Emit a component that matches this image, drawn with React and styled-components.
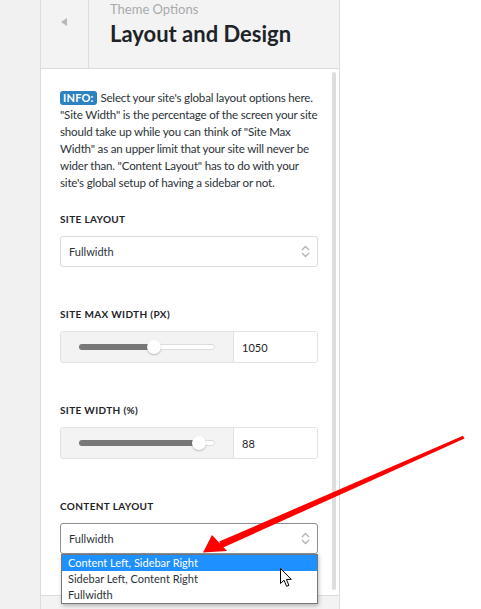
import React from 'react'
import styled, { createGlobalStyle } from 'styled-components'

const GlobalStyle = createGlobalStyle`
  html, body {
    margin: 0;
    padding: 0;
    background: #ffffff;
  }
  body {
    font-family: Lato, 'Noto Sans', Arial, sans-serif;
    color: #3c434a;
  }
`

const sections = [
  { id: 'site-max', label: 'Site Max Width (px)', value: '1050', percent: 55 },
  { id: 'site-width', label: 'Site Width (%)', value: '88', percent: 89 },
]

const layoutOptions = [
  'Content Left, Sidebar Right',
  'Sidebar Left, Content Right',
  'Fullwidth',
]

const Chevrons = () => (
  <svg width="9" height="13" viewBox="0 0 9 13">
    <path d="M1 5 L4.5 1.5 L8 5" fill="none" stroke="#b4b4b4" strokeWidth="1.4" />
    <path d="M1 8 L4.5 11.5 L8 8" fill="none" stroke="#b4b4b4" strokeWidth="1.4" />
  </svg>
)

const Pointer = () => (
  <svg width="13" height="20" viewBox="0 0 13 20">
    <path
      d="M0.5 0.5 L0.5 15.5 L4 12.2 L6.6 18.3 L8.9 17.3 L6.4 11.4 L11.3 11.4 Z"
      fill="#ffffff"
      stroke="#000000"
      strokeWidth="1"
      strokeLinejoin="round"
    />
  </svg>
)

const App = () => {
  return (
    <Page>
      <GlobalStyle />
      <Gutter />
      <Panel>
        <Header>
          <BackButton>
            <BackArrow />
          </BackButton>
          <Titles>
            <Crumb>Theme Options</Crumb>
            <Title>Layout and Design</Title>
          </Titles>
        </Header>

        <Body>
          <Content>
            <Intro>
              <Badge>INFO:</Badge> Select your site's global layout options here.
              "Site Width" is the percentage of the screen your site should take up
              while you can think of "Site Max Width" as an upper limit that your site
              will never be wider than. "Content Layout" has to do with your site's
              global setup of having a sidebar or not.
            </Intro>

            <Control>
              <Label>Site Layout</Label>
              <Select>
                <span>Fullwidth</span>
                <Chevrons />
              </Select>
            </Control>

            {sections.map(item => (
              <Control key={item.id}>
                <Label>{item.label}</Label>
                <RangeGroup>
                  <RangeWell>
                    <Track>
                      <Fill style={{ width: `${item.percent}%` }} />
                      <Thumb style={{ left: `${item.percent}%` }} />
                    </Track>
                  </RangeWell>
                  <NumberBox>{item.value}</NumberBox>
                </RangeGroup>
              </Control>
            ))}

            <Control>
              <Label>Content Layout</Label>
              <SelectWrap>
                <Select focused>
                  <span>Fullwidth</span>
                  <Chevrons />
                </Select>
                <Dropdown>
                  {layoutOptions.map((opt, i) => (
                    <Option key={opt} active={i === 0}>
                      {opt}
                    </Option>
                  ))}
                  <Cursor>
                    <Pointer />
                  </Cursor>
                </Dropdown>
              </SelectWrap>
            </Control>
          </Content>
          <Scrollbar />
        </Body>

        <Footer />
      </Panel>

      <Callout width="481" height="609" viewBox="0 0 481 609">
        <polygon points="463,435.8 464.5,438.6 222,548 219.2,541.6" fill="#ff0000" />
        <polygon points="203,552.5 212,535 227,551" fill="#ff0000" />
      </Callout>
    </Page>
  )
}

const Page = styled.div`
  position: relative;
  display: flex;
  height: 609px;
  overflow: hidden;
  background: #ffffff;
`

const Gutter = styled.div`
  width: 40px;
  flex-shrink: 0;
  background: #f1f1f1;
`

const Panel = styled.div`
  width: 298px;
  flex-shrink: 0;
  display: flex;
  flex-direction: column;
  border-left: 1px solid #dcdcde;
  border-right: 1px solid #dcdcde;
  background: #ffffff;
`

const Header = styled.div`
  display: flex;
  height: 68px;
  flex-shrink: 0;
  background: #f3f3f3;
  border-bottom: 1px solid #dcdcde;
`

const BackButton = styled.div`
  width: 48px;
  display: flex;
  justify-content: center;
  padding-top: 18px;
  box-sizing: border-box;
  border-right: 1px solid #dcdcde;
`

const BackArrow = styled.span`
  display: block;
  margin-left: -2px;
  width: 0;
  height: 0;
  border-top: 4px solid transparent;
  border-bottom: 4px solid transparent;
  border-right: 6px solid #b8b8b8;
`

const Titles = styled.div`
  display: flex;
  flex-direction: column;
  padding-left: 21px;
`

const Crumb = styled.span`
  font-size: 13px;
  line-height: 16px;
  margin-top: 1px;
  color: #a7aaad;
`

const Title = styled.h1`
  margin: 4px 0 0;
  font-size: 22px;
  line-height: 26px;
  font-weight: 700;
  color: #1d2327;
`

const Body = styled.div`
  flex: 1;
  display: flex;
  min-height: 0;
`

const Content = styled.div`
  width: 258px;
  padding: 20px 0 0 19px;
`

const Scrollbar = styled.div`
  width: 4px;
  margin: 3px 0 5px 14px;
  border-radius: 2px;
  background: #dddddd;
`

const Intro = styled.p`
  margin: 0 0 20px;
  font-size: 11.6px;
  line-height: 17px;
  letter-spacing: -0.2px;
  color: #2c3338;
`

const Badge = styled.span`
  display: inline-block;
  margin-right: 1px;
  padding: 0 3px;
  border-radius: 3px;
  background: #2c83bf;
  color: #ffffff;
  font-size: 11px;
  font-weight: 700;
  letter-spacing: 0.2px;
  line-height: 14px;
`

const Control = styled.div`
  margin-bottom: 39px;
`

const Label = styled.div`
  margin-bottom: 9px;
  font-size: 10px;
  line-height: 16px;
  font-weight: 700;
  letter-spacing: 0.35px;
  text-transform: uppercase;
  color: #1d2327;
`

const SelectWrap = styled.div`
  position: relative;
`

const Select = styled.div`
  height: 31px;
  box-sizing: border-box;
  display: flex;
  align-items: center;
  justify-content: space-between;
  padding: 0 7px 0 8px;
  border: 1px solid ${p => (p.focused ? '#8c8f94' : '#dcdcde')};
  border-radius: 3px;
  font-size: 11px;
  color: #2c3338;
`

const RangeGroup = styled.div`
  display: flex;
  height: 32px;
  box-sizing: border-box;
  border: 1px solid #e2e2e2;
  border-radius: 3px;
  overflow: hidden;
`

const RangeWell = styled.div`
  width: 173px;
  display: flex;
  align-items: center;
  padding: 0 18px 0 18px;
  box-sizing: border-box;
  background: #f3f3f3;
  border-right: 1px solid #e2e2e2;
`

const Track = styled.div`
  position: relative;
  flex: 1;
  height: 6px;
  box-sizing: border-box;
  border: 1px solid #dddddd;
  border-radius: 4px;
  background: #ffffff;
`

const Fill = styled.div`
  height: 6px;
  margin: -1px 0 0 -1px;
  border-radius: 4px;
  background: #777777;
`

const Thumb = styled.span`
  position: absolute;
  top: 50%;
  width: 14px;
  height: 14px;
  margin: -7px 0 0 -7px;
  border-radius: 50%;
  background: #ffffff;
  box-shadow: 0 1px 2px rgba(0, 0, 0, 0.25);
`

const NumberBox = styled.div`
  flex: 1;
  display: flex;
  align-items: center;
  padding-left: 8px;
  font-size: 11px;
  color: #1d2327;
  background: #ffffff;
`

const Dropdown = styled.div`
  position: absolute;
  top: 31px;
  left: 1px;
  width: 257px;
  box-sizing: border-box;
  border: 1px solid #767676;
  background: #ffffff;
  box-shadow: 1px 2px 4px rgba(0, 0, 0, 0.25);
  z-index: 2;
`

const Option = styled.div`
  height: 16px;
  line-height: 16px;
  padding-left: 6px;
  font-size: 11px;
  color: ${p => (p.active ? '#ffffff' : '#2c3338')};
  background: ${p => (p.active ? '#1e90ff' : '#ffffff')};
`

const Cursor = styled.div`
  position: absolute;
  left: 218px;
  top: 13px;
  line-height: 0;
`

const Footer = styled.div`
  height: 13px;
  flex-shrink: 0;
  background: #f3f3f3;
  border-top: 1px solid #dcdcde;
`

const Callout = styled.svg`
  position: absolute;
  left: 0;
  top: 0;
  pointer-events: none;
  z-index: 3;
`

export default App
